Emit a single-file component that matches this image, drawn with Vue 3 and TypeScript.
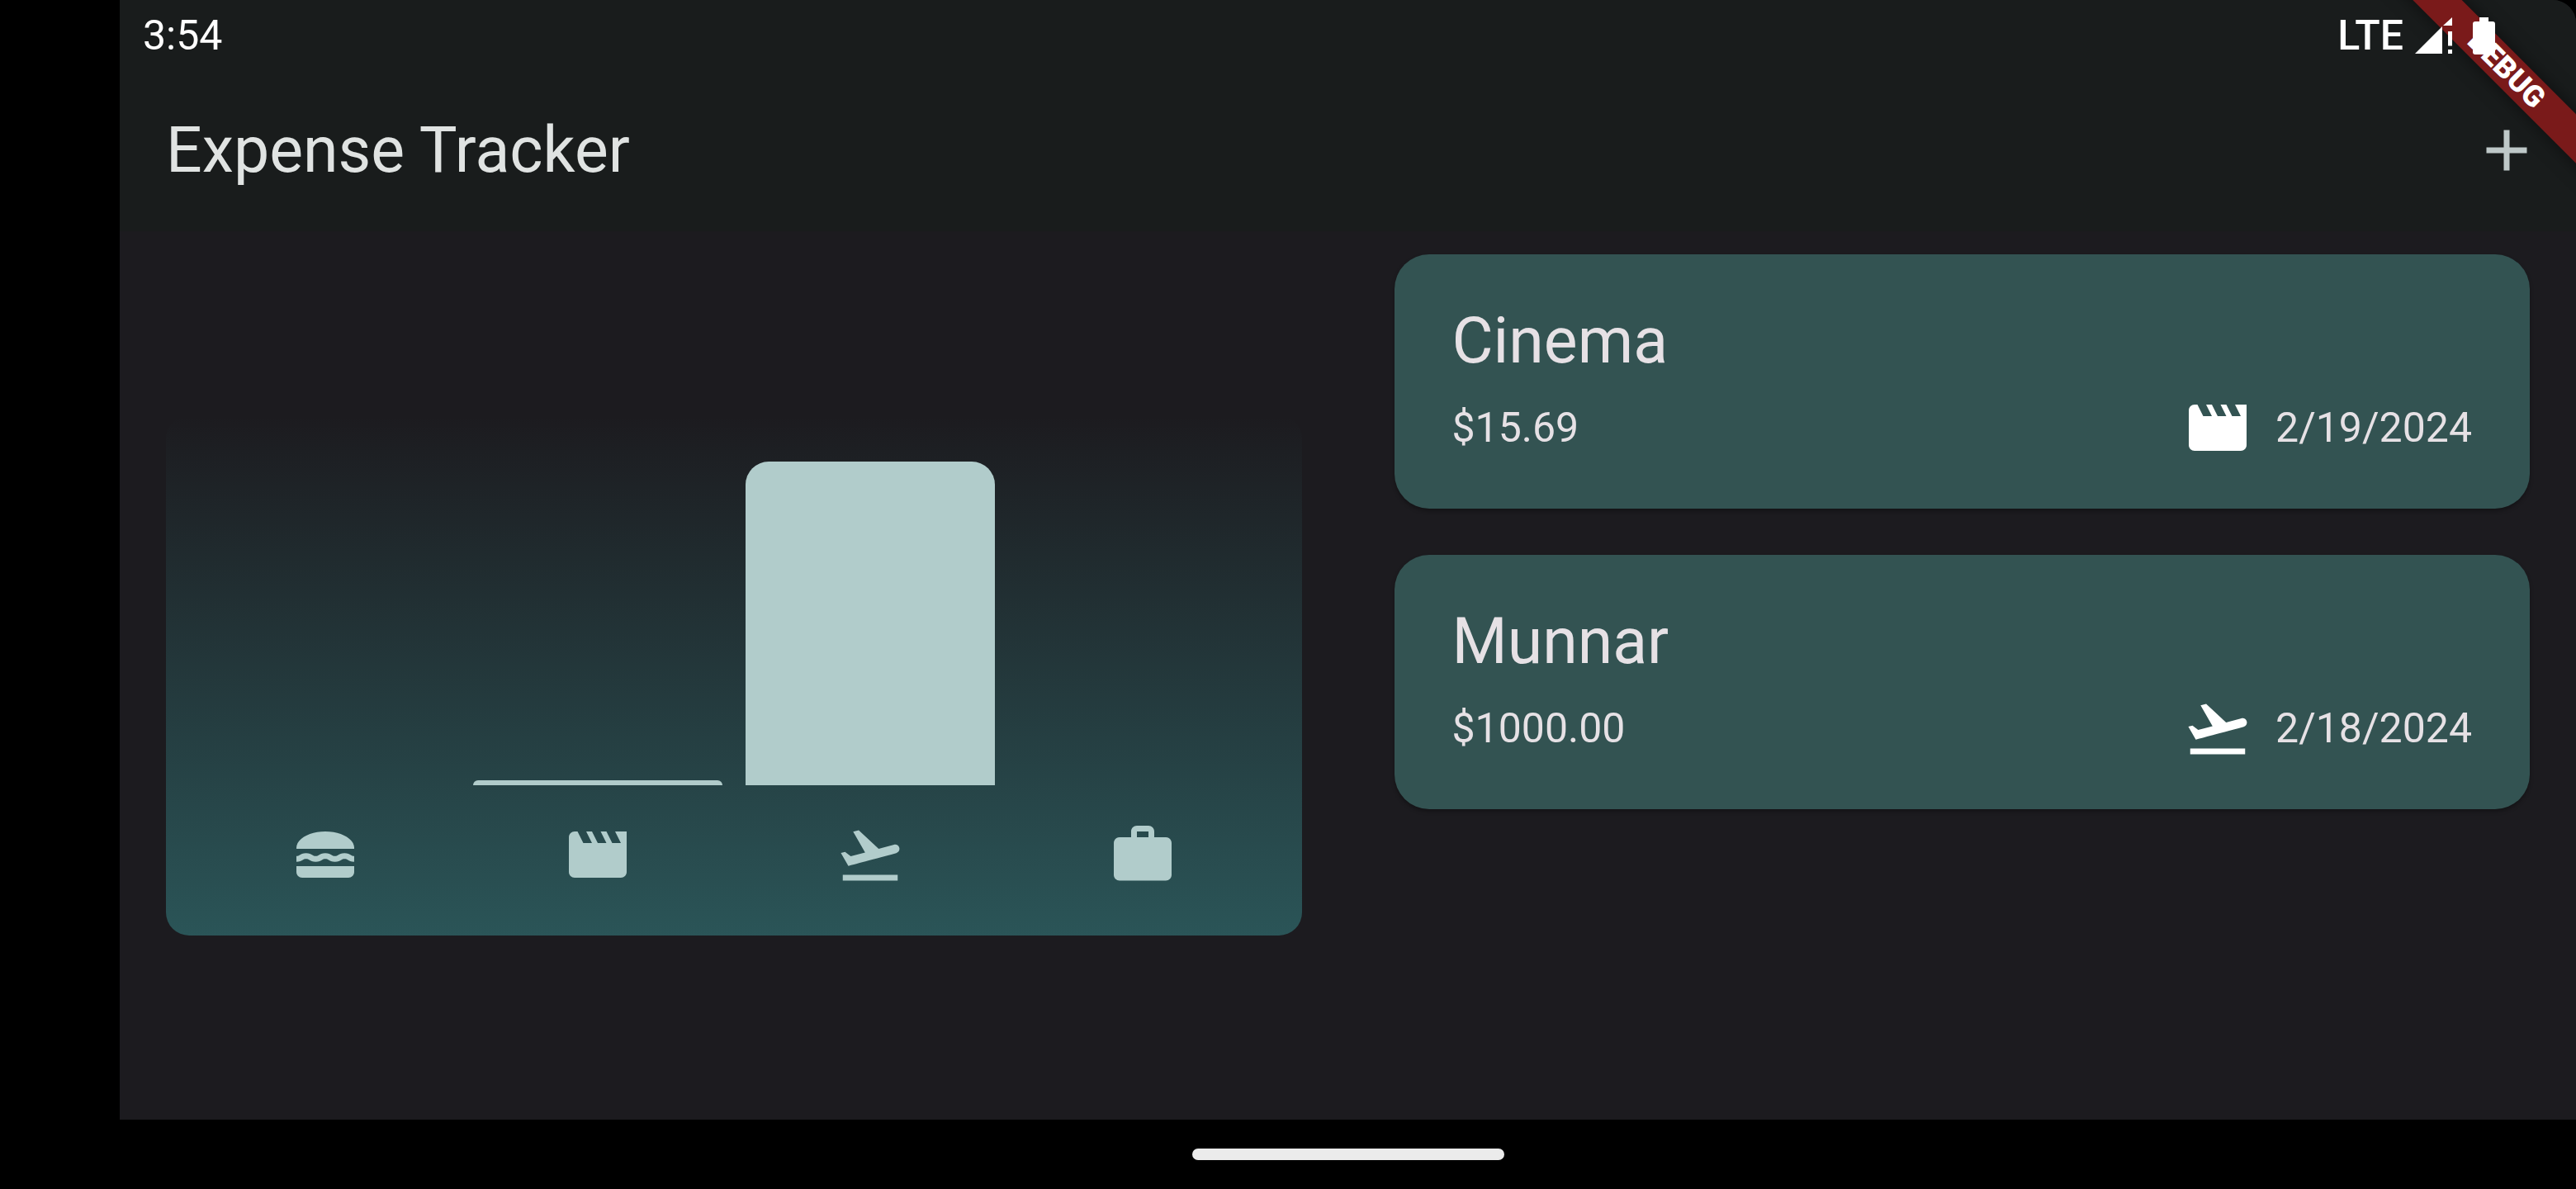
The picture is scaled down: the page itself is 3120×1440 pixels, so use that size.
<script setup lang="ts">
type Category = 'food' | 'leisure' | 'travel' | 'work'

interface Expense {
  title: string
  amount: number
  date: string
  category: Category
}

const icons: Record<Category, string> = {
  food: 'M22 10c.32-3.28-4.28-6-9.99-6C6.3 4 1.7 6.72 2.02 10H22zM5.35 13.5c.55 0 .78.14 1.15.36.45.27 1.07.64 2.18.64s1.73-.37 2.18-.64c.37-.23.59-.36 1.15-.36.55 0 .78.14 1.15.36.45.27 1.07.64 2.18.64 1.11 0 1.73-.37 2.18-.64.37-.23.59-.36 1.15-.36.55 0 .78.14 1.15.36.45.27 1.07.63 2.17.64v-1.98h-.01c-.54 0-.78-.14-1.15-.36-.45-.27-1.07-.64-2.18-.64s-1.73.37-2.18.64c-.37.23-.59.36-1.15.36-.55 0-.78-.14-1.15-.36-.45-.27-1.07-.64-2.18-.64s-1.73.37-2.18.64c-.37.23-.59.36-1.15.36-.55 0-.78-.14-1.15-.36-.45-.27-1.07-.64-2.18-.64s-1.73.37-2.18.64c-.37.22-.61.36-1.15.36v2c1.11 0 1.73-.37 2.21-.64.36-.23.59-.36 1.14-.36zM2 16v2c0 1.1.9 2 2 2h16c1.1 0 2-.9 2-2v-2H2z',
  leisure: 'M18 4l2 4h-3l-2-4h-2l2 4h-3l-2-4H8l2 4H7L5 4H4c-1.1 0-1.99.9-1.99 2L2 18c0 1.1.9 2 2 2h16c1.1 0 2-.9 2-2V4h-4z',
  travel: 'M2.5 19h19v2h-19v-2zm19.57-9.36c-.21-.8-1.04-1.28-1.84-1.06L14.92 10l-6.9-6.43-1.93.51 4.14 7.17-4.97 1.33-1.97-1.54-1.45.39 2.59 4.49s7.12-1.9 16.57-4.43c.81-.23 1.28-1.05 1.07-1.85z',
  work: 'M20 6h-4V4c0-1.11-.89-2-2-2h-4c-1.11 0-2 .89-2 2v2H4c-1.11 0-1.99.89-1.99 2L2 19c0 1.11.89 2 2 2h16c1.11 0 2-.89 2-2V8c0-1.11-.89-2-2-2zm-6 0h-4V4h4v2z',
}

const categories: Category[] = ['food', 'leisure', 'travel', 'work']

const expenses: Expense[] = [
  { title: 'Cinema', amount: 15.69, date: '2/19/2024', category: 'leisure' },
  { title: 'Munnar', amount: 1000, date: '2/18/2024', category: 'travel' },
]

const totals = categories.map((category) => ({
  category,
  total: expenses.filter((e) => e.category === category).reduce((sum, e) => sum + e.amount, 0),
}))
const highest = Math.max(...totals.map((t) => t.total))
</script>

<template>
  <div class="device">
    <div class="app">
      <div class="debug-corner"><span class="debug-ribbon">DEBUG</span></div>

      <div class="status-bar">
        <span>3:54</span>
        <div class="status-icons">
          <span class="network">LTE</span>
          <svg class="signal" viewBox="0 0 45 44" aria-hidden="true">
            <path d="M0 44L33 11V44zM34 10L45 0V10zM40 17h5v17.500h-5zM40 39h5v5h-5z" />
          </svg>
          <svg class="battery" viewBox="0 0 27 45" aria-hidden="true">
            <path d="M8 0H19V5H24Q27 5 27 8V42Q27 45 24 45H3Q0 45 0 42V8Q0 5 3 5H8z" />
          </svg>
        </div>
      </div>

      <header class="app-bar">
        <h1>Expense Tracker</h1>
        <button type="button" class="add" aria-label="Add expense">
          <svg class="icon" viewBox="0 0 24 24" aria-hidden="true">
            <path d="M19 13h-6v6h-2v-6H5v-2h6V5h2v6h6v2z" />
          </svg>
        </button>
      </header>

      <main class="content">
        <section class="chart" aria-label="Expenses by category">
          <div class="bars">
            <div v-for="t in totals" :key="t.category" class="bar-slot">
              <div class="bar" :style="{ height: (t.total / highest) * 100 + '%' }"></div>
            </div>
          </div>
          <div class="legend">
            <svg v-for="t in totals" :key="t.category" class="icon" viewBox="0 0 24 24" aria-hidden="true">
              <path :d="icons[t.category]" />
            </svg>
          </div>
        </section>

        <ul class="expenses">
          <li v-for="e in expenses" :key="e.title" class="card">
            <h2>{{ e.title }}</h2>
            <div class="details">
              <span>${{ e.amount.toFixed(2) }}</span>
              <div class="when">
                <svg class="icon" viewBox="0 0 24 24" aria-hidden="true">
                  <path :d="icons[e.category]" />
                </svg>
                <time>{{ e.date }}</time>
              </div>
            </div>
          </li>
        </ul>
      </main>
    </div>

    <div class="nav-bar"><div class="nav-handle"></div></div>
  </div>
</template>

<style>
body {
  margin: 0;
  background: #000;
}
</style>

<style scoped>
.device {
  box-sizing: border-box;
  display: flex;
  flex-direction: column;
  min-height: 100vh;
  padding-left: 145px;
  background: #000;
  font-family: Roboto, sans-serif;
  font-size: 50px;
  line-height: 70px;
}

.app {
  position: relative;
  flex: 1;
  display: flex;
  flex-direction: column;
  border-top-right-radius: 28px;
  overflow: hidden;
  background: #1c1b1f;
}

.icon {
  display: block;
  width: 84px;
  height: 84px;
  fill: currentColor;
}

.status-bar {
  box-sizing: border-box;
  display: flex;
  align-items: center;
  justify-content: space-between;
  height: 84px;
  padding: 2px 98px 0 28px;
  background: #191c1c;
  color: #fff;
}

.status-icons {
  display: flex;
  align-items: center;
  z-index: 2;
}

.network {
  font-weight: 500;
}

.signal,
.battery {
  display: block;
  fill: currentColor;
}

.signal {
  width: 45px;
  height: 44px;
  margin: 0 25px 0 14px;
}

.battery {
  width: 27px;
  height: 45px;
}

.debug-corner {
  position: absolute;
  top: 0;
  right: 0;
  z-index: 1;
  width: 280px;
  height: 280px;
  overflow: hidden;
  pointer-events: none;
}

.debug-ribbon {
  position: absolute;
  top: 63px;
  right: -116px;
  width: 400px;
  height: 42px;
  transform: rotate(45deg);
  background: #7a1a1a;
  box-shadow: 0 0 21px rgba(0, 0, 0, 0.5);
  color: #fff;
  font-size: 36px;
  font-weight: 900;
  line-height: 42px;
  text-align: center;
}

.app-bar {
  display: flex;
  align-items: center;
  justify-content: space-between;
  height: 196px;
  padding-left: 56px;
  background: #191c1c;
  color: #e0e3e2;
}

h1,
h2 {
  margin: 0;
  font-size: 77px;
  font-weight: 400;
  line-height: 98px;
}

.add {
  padding: 42px;
  border: 0;
  background: none;
  color: #bec8c8;
}

.content {
  flex: 1;
  display: grid;
  grid-template-columns: 1fr 1fr;
  gap: 112px;
  padding: 0 56px;
}

.chart {
  box-sizing: border-box;
  display: flex;
  flex-direction: column;
  align-self: center;
  gap: 42px;
  height: 630px;
  padding: 56px 28px;
  border-radius: 28px;
  background: linear-gradient(to top, rgba(76, 218, 218, 0.3), rgba(76, 218, 218, 0));
  color: #b1cccb;
}

.bars,
.legend {
  display: grid;
  grid-template-columns: repeat(4, 1fr);
}

.bars {
  flex: 1;
}

.bar-slot {
  display: flex;
  align-items: flex-end;
  padding: 0 14px;
}

.bar {
  flex: 1;
  border-radius: 28px 28px 0 0;
  background: currentColor;
}

.legend {
  justify-items: center;
}

.expenses {
  display: flex;
  flex-direction: column;
  gap: 56px;
  margin: 0;
  padding: 28px 0;
  list-style: none;
}

.card {
  padding: 56px 70px;
  border-radius: 42px;
  background: #335352;
  box-shadow: 0 3px 5px rgba(0, 0, 0, 0.3);
  color: #e6e1e5;
}

.details {
  display: flex;
  align-items: center;
  justify-content: space-between;
  margin-top: 14px;
}

.when {
  display: flex;
  align-items: center;
  gap: 28px;
}

.when .icon {
  color: #fff;
}

.nav-bar {
  display: flex;
  align-items: center;
  justify-content: center;
  height: 84px;
}

.nav-handle {
  width: 378px;
  height: 14px;
  border-radius: 7px;
  background: #ebebeb;
}
</style>
